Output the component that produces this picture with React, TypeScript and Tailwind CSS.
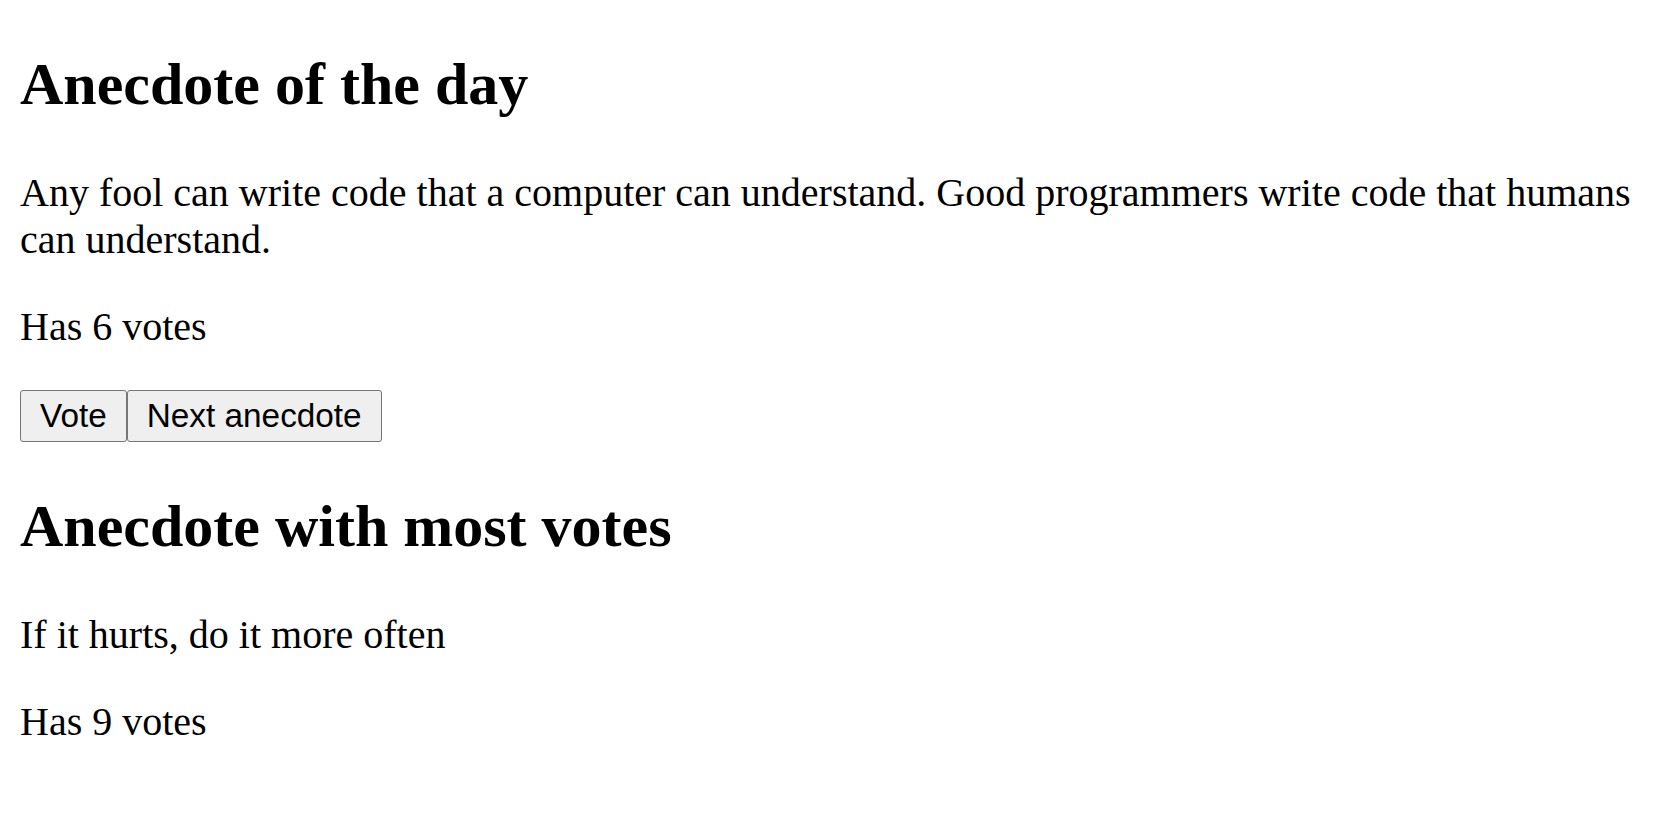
import React from "react";

export default function App() {
  const serif = { fontFamily: '"Liberation Serif", "Times New Roman", serif' };
  const btn =
    "bg-[#efefef] border border-[#767676] rounded-[3px] px-[19px] py-[6px] text-[33.33px] leading-[38px] text-black font-['Liberation_Sans',Arial,sans-serif]";
  return (
    <div className="m-[20px] text-black" style={serif}>
      <h2 className="text-[60px] font-bold leading-[69px] my-[50px]">Anecdote of the day</h2>
      <p className="text-[40px] leading-[47px] my-[40px]">
        Any fool can write code that a computer can understand. Good programmers write code that humans can understand.
      </p>
      <p className="text-[40px] leading-[47px] my-[40px]">Has 6 votes</p>
      <div className="flex">
        <button className={btn}>Vote</button>
        <button className={btn}>Next anecdote</button>
      </div>
      <h2 className="text-[60px] font-bold leading-[69px] my-[50px]">Anecdote with most votes</h2>
      <p className="text-[40px] leading-[47px] my-[40px]">If it hurts, do it more often</p>
      <p className="text-[40px] leading-[47px] my-[40px]">Has 9 votes</p>
    </div>
  );
}
